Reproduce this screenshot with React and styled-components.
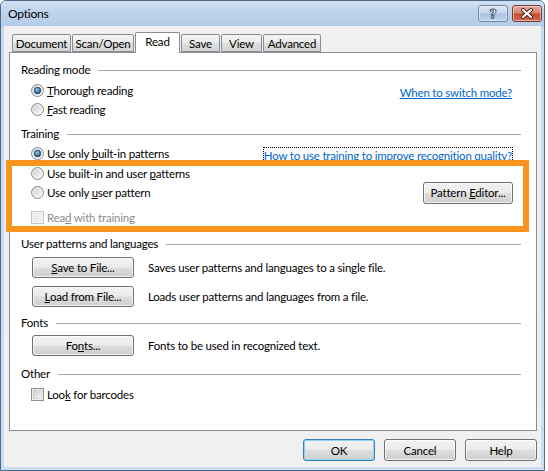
import React from 'react'
import styled, { createGlobalStyle } from 'styled-components'

const GlobalStyle = createGlobalStyle`
  html, body {
    margin: 0;
    padding: 0;
    background: #ffffff;
  }
  body {
    font-family: Lato, "Noto Sans", sans-serif;
    font-size: 11.5px;
    letter-spacing: -0.2px;
    color: #000;
  }
`

const Window = styled.div`
  width: 545px;
  height: 471px;
  box-sizing: border-box;
  border: 1px solid #4f6a88;
  border-radius: 6px 6px 0 0;
  padding: 0 3px 3px 3px;
  display: flex;
  flex-direction: column;
  background: linear-gradient(to bottom, #c9dcf1 0, #b9d0ea 26px, #c8dbf0 27px, #cbddf1 100%);
  overflow: hidden;
`

const TitleBar = styled.div`
  height: 25px;
  margin: 0 -3px;
  padding: 0 2px 0 7px;
  display: flex;
  align-items: flex-start;
  background: linear-gradient(to bottom, #cfe0f3 0%, #bdd3eb 45%, #b5cce7 100%);
`

const Title = styled.div`
  flex: 1;
  line-height: 26px;
  font-size: 12px;
  color: #000;
`

const CaptionButton = styled.div`
  width: ${p => p.$w}px;
  height: 17px;
  margin-top: 4px;
  margin-left: ${p => p.$ml || 0}px;
  box-sizing: border-box;
  border-radius: 3px;
  display: flex;
  align-items: center;
  justify-content: center;
  border: 1px solid ${p => (p.$red ? '#7a3a2e' : '#6f87a4')};
  background: ${p =>
    p.$red
      ? 'linear-gradient(to bottom, #e6ab9d 0%, #d6806c 48%, #c34a31 52%, #d16c52 100%)'
      : 'linear-gradient(to bottom, #dce8f5 0%, #c3d5eb 48%, #aac1de 52%, #bfd3ea 100%)'};
  box-shadow: inset 0 0 0 1px rgba(255, 255, 255, 0.45);
`

const QuestionMark = styled.span`
  font-family: "DejaVu Sans", sans-serif;
  font-weight: bold;
  font-size: 13px;
  line-height: 13px;
  letter-spacing: 0;
  color: #fff;
  -webkit-text-stroke: 0.8px #2f4763;
`

const Body = styled.div`
  flex: 1;
  background: #f0f0f0;
  padding: 6px 4px 6px 5px;
  display: flex;
  flex-direction: column;
`

const TabRow = styled.div`
  height: 20px;
  padding-left: 3px;
  display: flex;
  align-items: flex-end;
  gap: 1px;
  position: relative;
  z-index: 1;
`

const Tab = styled.div`
  width: ${p => p.$w}px;
  height: ${p => (p.$active ? 21 : 18)}px;
  margin-bottom: ${p => (p.$active ? -1 : 0)}px;
  box-sizing: border-box;
  border: 1px solid #898c95;
  border-bottom: ${p => (p.$active ? 'none' : '1px solid #898c95')};
  border-radius: 2px 2px 0 0;
  background: ${p =>
    p.$active ? '#ffffff' : 'linear-gradient(to bottom, #f5f5f5 0%, #ebebeb 50%, #dddddd 51%, #d6d6d6 100%)'};
  display: flex;
  justify-content: center;
  padding-top: 1px;
  line-height: 16px;
`

const Panel = styled.div`
  position: relative;
  height: 379px;
  box-sizing: border-box;
  background: #ffffff;
  border: 1px solid #898c95;
  padding: 8px 15px 0 11px;
  display: flex;
  flex-direction: column;
`

const Heading = styled.div`
  height: 16px;
  margin-top: ${p => p.$mt || 0}px;
  display: flex;
  align-items: center;
  &::after {
    content: '';
    flex: 1;
    height: 1px;
    margin: 2px 0 0 8px;
    background: #a7a7a7;
  }
`

const OptionRow = styled.div`
  height: 19px;
  margin: ${p => p.$mt || 0}px 0 0 10px;
  padding-right: 8px;
  display: flex;
  align-items: center;
  color: ${p => (p.$disabled ? '#8d8d8d' : '#000')};
`

const OptionLabel = styled.span`
  margin-left: 3px;
  line-height: 16px;
`

const Spacer = styled.div`
  flex: 1;
`

const Key = styled.span`
  text-decoration: underline;
`

const HelpLink = styled.span`
  color: #0066cc;
  text-decoration: underline;
  line-height: 15px;
  margin-top: ${p => p.$mt || 0}px;
  border: 1px ${p => (p.$focused ? 'dotted #000' : 'solid transparent')};
`

const ButtonRow = styled.div`
  height: 21px;
  margin: ${p => p.$mt || 0}px 0 0 11px;
  display: flex;
  align-items: center;
`

const Button = styled.div`
  width: ${p => p.$w}px;
  height: ${p => p.$h || 21}px;
  flex: none;
  box-sizing: border-box;
  border-radius: 3px;
  border: 1px solid ${p => (p.$default ? '#3c7fb1' : '#707070')};
  background: linear-gradient(to bottom, #f2f2f2 0%, #ebebeb 48%, #dddddd 52%, #cfcfcf 100%);
  box-shadow: inset 0 0 0 1px ${p => (p.$default ? '#8fd3f3' : 'rgba(255, 255, 255, 0.7)')};
  display: flex;
  align-items: center;
  justify-content: center;
  color: #000;
`

const ButtonNote = styled.span`
  margin-left: 14px;
`

const Footer = styled.div`
  margin-top: 8px;
  display: flex;
  justify-content: flex-end;
  gap: 9px;
`

const Highlight = styled.div`
  position: absolute;
  left: -4px;
  top: 107px;
  width: 523px;
  height: 72px;
  box-sizing: border-box;
  border: 6px solid #f7941d;
  pointer-events: none;
  z-index: 2;
`

function Radio({ checked }) {
  return (
    <svg width="13" height="13" viewBox="0 0 13 13" style={{ flex: 'none' }}>
      <defs>
        <linearGradient id="radioFill" x1="0" y1="0" x2="1" y2="1">
          <stop offset="0" stopColor="#c9c9c9" />
          <stop offset="1" stopColor="#ffffff" />
        </linearGradient>
        <radialGradient id="radioDot" cx="45%" cy="40%" r="65%">
          <stop offset="0" stopColor="#a9d3f0" />
          <stop offset="0.55" stopColor="#3c74a2" />
          <stop offset="1" stopColor="#1d3d5c" />
        </radialGradient>
      </defs>
      <circle cx="6.5" cy="6.5" r="6" fill="url(#radioFill)" stroke="#8a8c8e" />
      <circle cx="6.5" cy="6.5" r="4.6" fill="none" stroke="#f4f4f4" strokeWidth="0.8" />
      {checked && <circle cx="6.5" cy="6.5" r="3.4" fill="url(#radioDot)" stroke="#34506b" strokeWidth="0.6" />}
    </svg>
  )
}

function Check({ disabled }) {
  return (
    <svg width="13" height="13" viewBox="0 0 13 13" style={{ flex: 'none' }}>
      <defs>
        <linearGradient id="checkFill" x1="0" y1="0" x2="1" y2="1">
          <stop offset="0" stopColor="#cbcbcb" />
          <stop offset="1" stopColor="#f7f7f7" />
        </linearGradient>
      </defs>
      <rect x="0.5" y="0.5" width="12" height="12" fill="#fff" stroke={disabled ? '#c6c6c6' : '#8f8f8f'} />
      <rect x="2" y="2" width="9" height="9" fill={disabled ? '#eeeeee' : 'url(#checkFill)'} stroke={disabled ? '#e0e0e0' : '#bdbdbd'} strokeWidth="0.6" />
    </svg>
  )
}

function CloseGlyph() {
  return (
    <svg width="14" height="11" viewBox="0 0 14 11">
      <path d="M3 2 L11 9 M11 2 L3 9" stroke="#4a1f17" strokeWidth="4" strokeLinecap="round" />
      <path d="M3 2 L11 9 M11 2 L3 9" stroke="#ffffff" strokeWidth="2.2" strokeLinecap="round" />
    </svg>
  )
}

const tabs = [
  { label: 'Document', w: 59 },
  { label: 'Scan/Open', w: 62 },
  { label: 'Read', w: 45, active: true },
  { label: 'Save', w: 39 },
  { label: 'View', w: 41 },
  { label: 'Advanced', w: 58 },
]

export default function App() {
  return (
    <>
      <GlobalStyle />
      <Window>
        <TitleBar>
          <Title>Options</Title>
          <CaptionButton $w={30}>
            <QuestionMark>?</QuestionMark>
          </CaptionButton>
          <CaptionButton $w={30} $ml={4} $red>
            <CloseGlyph />
          </CaptionButton>
        </TitleBar>
        <Body>
          <TabRow>
            {tabs.map(t => (
              <Tab key={t.label} $w={t.w} $active={t.active}>
                {t.label}
              </Tab>
            ))}
          </TabRow>
          <Panel>
            <Heading>Reading mode</Heading>
            <OptionRow $mt={4}>
              <Radio checked />
              <OptionLabel><Key>T</Key>horough reading</OptionLabel>
              <Spacer />
              <HelpLink $mt={3}>When to switch mode?</HelpLink>
            </OptionRow>
            <OptionRow>
              <Radio />
              <OptionLabel><Key>F</Key>ast reading</OptionLabel>
            </OptionRow>

            <Heading $mt={6}>Training</Heading>
            <OptionRow $mt={3}>
              <Radio checked />
              <OptionLabel>Use only <Key>b</Key>uilt-in patterns</OptionLabel>
              <Spacer />
              <HelpLink $mt={4} $focused>How to use training to improve recognition quality?</HelpLink>
            </OptionRow>
            <OptionRow $mt={1}>
              <Radio />
              <OptionLabel>Use built-in and user <Key>p</Key>atterns</OptionLabel>
            </OptionRow>
            <OptionRow>
              <Radio />
              <OptionLabel>Use only <Key>u</Key>ser pattern</OptionLabel>
              <Spacer />
              <Button $w={90} $h={22}><span>Pattern <Key>E</Key>ditor...</span></Button>
            </OptionRow>
            <OptionRow $mt={6} $disabled>
              <Check disabled />
              <OptionLabel>Rea<Key>d</Key> with training</OptionLabel>
            </OptionRow>

            <Heading $mt={8}>User patterns and languages</Heading>
            <ButtonRow $mt={6}>
              <Button $w={102}><span><Key>S</Key>ave to File...</span></Button>
              <ButtonNote>Saves user patterns and languages to a single file.</ButtonNote>
            </ButtonRow>
            <ButtonRow $mt={8}>
              <Button $w={102}><span><Key>L</Key>oad from File...</span></Button>
              <ButtonNote>Loads user patterns and languages from a file.</ButtonNote>
            </ButtonRow>

            <Heading $mt={7}>Fonts</Heading>
            <ButtonRow $mt={5}>
              <Button $w={102}><span>Fo<Key>n</Key>ts...</span></Button>
              <ButtonNote>Fonts to be used in recognized text.</ButtonNote>
            </ButtonRow>

            <Heading $mt={9}>Other</Heading>
            <OptionRow $mt={4}>
              <Check />
              <OptionLabel>Loo<Key>k</Key> for barcodes</OptionLabel>
            </OptionRow>

            <Highlight />
          </Panel>
          <Footer>
            <Button $w={72} $h={22} $default>OK</Button>
            <Button $w={72} $h={22}>Cancel</Button>
            <Button $w={72} $h={22}>Help</Button>
          </Footer>
        </Body>
      </Window>
    </>
  )
}
